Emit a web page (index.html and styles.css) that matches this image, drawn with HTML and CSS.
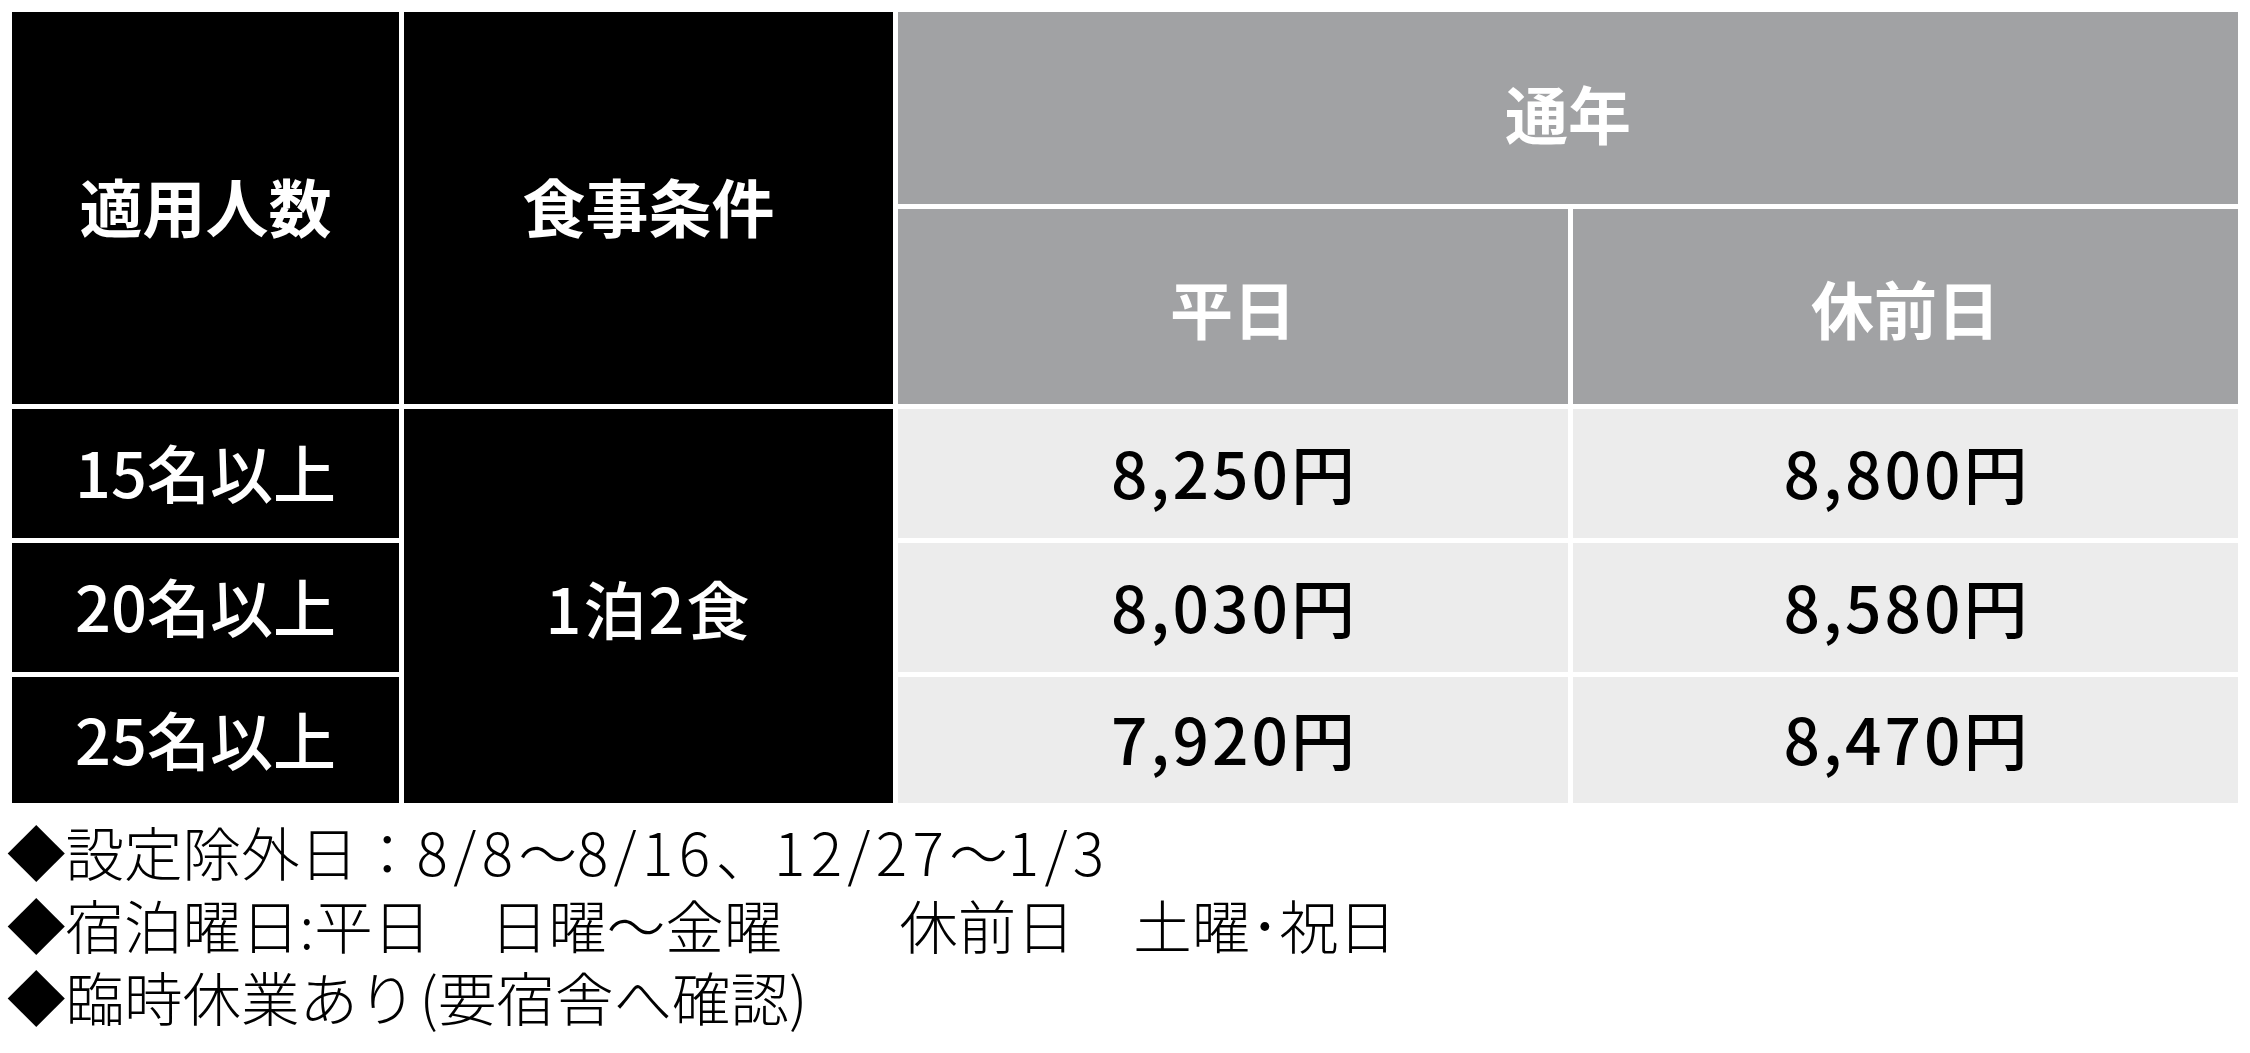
FILE: index.html
```html
<!DOCTYPE html>
<html lang="ja">
<head>
<meta charset="utf-8">
<title>料金表</title>
<link rel="stylesheet" href="styles.css">
</head>
<body>
<table class="price-table">
  <colgroup>
    <col class="c1"><col class="c2"><col class="c3"><col class="c4">
  </colgroup>
  <thead>
    <tr class="h1">
      <th class="dark corner" rowspan="2">適用人数</th>
      <th class="dark corner" rowspan="2">食事条件</th>
      <th class="gray top" colspan="2">通年</th>
    </tr>
    <tr class="h2">
      <th class="gray">平日</th>
      <th class="gray">休前日</th>
    </tr>
  </thead>
  <tbody>
    <tr class="r1">
      <td class="dark label">15名以上</td>
      <td class="dark label meal" rowspan="3">1泊2食</td>
      <td class="light">8,250円</td>
      <td class="light">8,800円</td>
    </tr>
    <tr class="r2">
      <td class="dark label">20名以上</td>
      <td class="light">8,030円</td>
      <td class="light">8,580円</td>
    </tr>
    <tr class="r3">
      <td class="dark label">25名以上</td>
      <td class="light">7,920円</td>
      <td class="light">8,470円</td>
    </tr>
  </tbody>
</table>
<div class="notes">
  <p>◆設定除外日：<span class="num">8/8</span>〜<span class="num">8/16</span>、<span class="num">12/27</span>〜<span class="num">1/3</span></p>
  <p>◆宿泊曜日:平日　日曜〜金曜　　休前日　土曜･祝日</p>
  <p>◆臨時休業あり<span class="paren">(</span>要宿舎へ確認)</p>
</div>
</body>
</html>
```

FILE: styles.css
```css
html, body {
  margin: 0;
  padding: 0;
  background: #ffffff;
}
body {
  padding: 7px;
  font-family: "Noto Sans CJK JP", "Noto Sans", sans-serif;
  color: #000;
}
.price-table {
  border-collapse: separate;
  border-spacing: 5px;
  table-layout: fixed;
  width: 2236px;
}
.price-table col.c1 { width: 387px; }
.price-table col.c2 { width: 489px; }
.price-table col.c3 { width: 670px; }
.price-table col.c4 { width: 665px; }
.price-table th,
.price-table td {
  padding: 0;
  text-align: center;
  vertical-align: middle;
  font-size: 63px;
  line-height: 1;
}
.price-table th {
  font-weight: 700;
  color: #fff;
}
.price-table th.corner {
  padding-bottom: 8px;
}
.price-table th.top {
  padding-top: 7px;
}
.price-table td {
  font-weight: 500;
  padding-bottom: 6px;
}
.price-table td.meal {
  padding-bottom: 0;
  letter-spacing: 2px;
}
.h1 { height: 192px; }
.h2 { height: 195px; }
.r1, .r2 { height: 129px; }
.r3 { height: 126px; }
.dark {
  background: #000;
  color: #fff;
}
.gray {
  background: #a1a2a4;
  color: #fff;
}
.light {
  background: #ececec;
  color: #000;
}
.price-table td.light {
  font-size: 64px;
  letter-spacing: 3px;
  text-indent: 3px;
}
.label {
  color: #fff;
}
.notes {
  margin-top: 7px;
  font-size: 58.5px;
  line-height: 72.5px;
  font-weight: 300;
}
.notes p {
  margin: 0;
  white-space: pre;
}
.notes .num {
  letter-spacing: 5.4px;
}
.notes .paren {
  margin-left: 3px;
}
```
